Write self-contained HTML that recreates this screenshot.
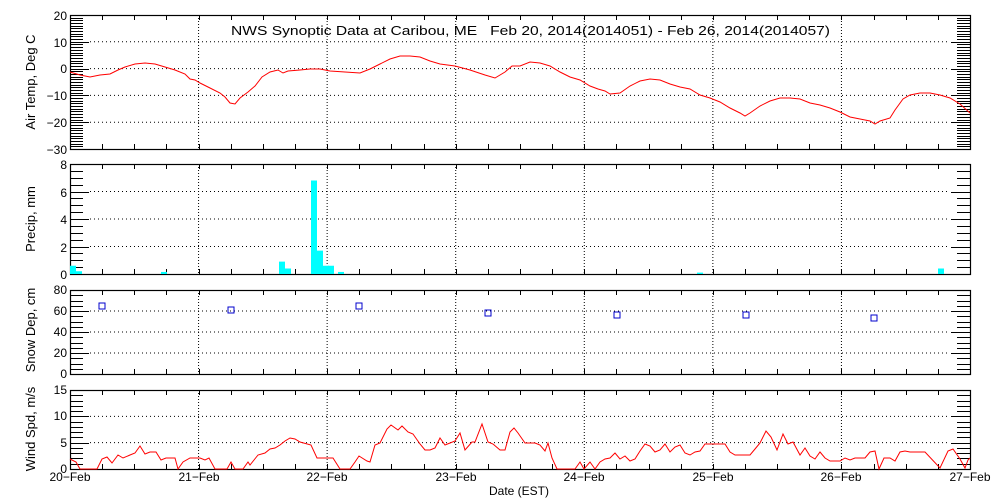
<!DOCTYPE html>
<html><head><meta charset="utf-8"><style>
html,body{margin:0;padding:0;background:#fff;width:1000px;height:500px;overflow:hidden}
svg{display:block}
text{font-family:"Liberation Sans",sans-serif;font-size:12px;fill:#000}
</style></head><body>
<svg id="s" width="1000" height="500" xmlns="http://www.w3.org/2000/svg">
<g id="g"></g>
<text x="231" y="35" textLength="599" lengthAdjust="spacingAndGlyphs" style="font-size:13px;white-space:pre" xml:space="preserve">NWS Synoptic Data at Caribou, ME   Feb 20, 2014(2014051) - Feb 26, 2014(2014057)</text>
<g text-anchor="end">
<text x="67" y="20">20</text><text x="67" y="47">10</text><text x="67" y="73">0</text><text x="67" y="100">−10</text><text x="67" y="127">−20</text><text x="67" y="154">−30</text>
<text x="67" y="169">8</text><text x="67" y="197">6</text><text x="67" y="224">4</text><text x="67" y="252">2</text><text x="67" y="279">0</text>
<text x="67" y="294">80</text><text x="67" y="315">60</text><text x="67" y="336">40</text><text x="67" y="357">20</text><text x="67" y="378">0</text>
<text x="67" y="394">15</text><text x="67" y="420">10</text><text x="67" y="447">5</text><text x="67" y="473">0</text>
</g>
<g text-anchor="middle">
<text transform="translate(35,82) rotate(-90)" style="font-size:13px">Air Temp, Deg C</text>
<text transform="translate(35,219) rotate(-90)" style="font-size:13px">Precip, mm</text>
<text transform="translate(35,330) rotate(-90)" style="font-size:13px">Snow Dep, cm</text>
<text transform="translate(35,429) rotate(-90)" style="font-size:13px">Wind Spd, m/s</text>
<text x="70" y="481">20−Feb</text><text x="199" y="481">21−Feb</text><text x="327" y="481">22−Feb</text><text x="456" y="481">23−Feb</text><text x="584" y="481">24−Feb</text><text x="713" y="481">25−Feb</text><text x="841" y="481">26−Feb</text><text x="970" y="481">27−Feb</text>
<text x="519" y="495" style="font-size:12px">Date (EST)</text>
</g>
</svg>
<script>
var g=document.getElementById('g'),h='';
function L(x1,y1,x2,y2,a){h+='<line x1="'+x1+'" y1="'+y1+'" x2="'+x2+'" y2="'+y2+'" stroke="#000" stroke-width="1" '+(a||'')+'/>';}
var P=[[15,149,20,-30,1,10,[10,0,-10,-20]],[164,274,8,0,0.5,2,[6,4,2]],[290,374,80,0,5,20,[60,40,20]],[390,469,15,0,1,5,[10,5]]];
var D=900/7;
P.forEach(function(p){var t=p[0],b=p[1],hi=p[2],lo=p[3];
function Y(v){return t+(hi-v)*(b-t)/(hi-lo);}
for(var d=1;d<7;d++){var x=70+d*D;L(x,t,x,b,'stroke-dasharray="1,2"');}
p[6].forEach(function(v){L(90,Y(v),950,Y(v),'stroke-dasharray="1,3"');});
for(var v=lo;v<=hi+1e-6;v+=p[4]){var m=Math.abs(v/p[5]-Math.round(v/p[5]))<1e-6;var len=m?19:13;var y=Math.round(Y(v))+0.5;L(70,y,70+len,y);L(970,y,970-len,y);}
for(var q=1;q<28;q++){var x=Math.round(70+q*D/4)+0.5;L(x,t,x,t+5);L(x,b,x,b-5);}
h+='<rect x="70.5" y="'+(t+0.5)+'" width="900" height="'+(b-t)+'" fill="none" stroke="#000" stroke-width="1.2"/>';
});
var bars=[[70,0.6],[76,0.2],[161,0.15],[279,0.9],[285,0.4],[311,6.8],[317,1.7],[323,0.6],[328,0.6],[338,0.15],[697,0.1],[938,0.4]];
bars.forEach(function(b){var y=274-b[1]*13.75;h+='<rect x="'+b[0]+'" y="'+y+'" width="6" height="'+(274-y)+'" fill="#0ff"/>';});
var tp="70,72 80,75 90,77 100,75 110,74 118,70 125,67 135,64 145,63 155,64 165,67 175,70 185,74 190,79 195,80 200,83 210,88 220,93 225,97 230,103 235,104 240,98 248,92 255,86 262,77 270,72 278,70 283,73 288,71 300,70 310,69 320,69 330,71 345,72 360,73 370,69 380,64 390,59 400,56 410,56 420,57 430,61 440,64 455,66 470,70 485,75 495,78 505,72 512,66 520,66 530,62 540,63 550,66 560,72 570,77 580,80 590,86 598,89 605,91 610,94 620,93 630,86 640,81 650,79 660,80 670,84 680,87 690,89 700,95 710,98 720,102 730,108 740,113 745,116 750,113 760,106 770,101 780,98 790,98 800,99 810,103 820,105 830,108 840,112 850,117 860,119 870,121 875,124 880,121 890,118 895,110 903,99 910,95 920,93 930,93 940,95 950,98 960,104 970,113";
h+='<polyline points="'+tp+'" fill="none" stroke="#f00" stroke-width="1"/>';
var wp="70,459 76,462 80,469 97,469 102,459 107,457 112,463 118,455 123,458 130,455 135,453 140,446 145,454 150,452 156,452 161,460 166,458 175,458 178,469 183,462 190,458 200,458 205,460 209,458 215,469 227,469 231,462 235,469 243,469 248,462 250,465 258,455 265,453 270,449 275,448 280,445 285,441 290,438 295,439 300,442 311,445 317,458 333,458 340,469 350,469 355,462 359,456 367,461 370,462 375,445 380,443 387,429 391,425 398,430 402,426 408,432 413,434 420,444 425,450 430,450 435,448 440,438 445,445 450,443 455,441 460,433 465,450 472,442 475,442 482,424 488,442 493,444 500,450 505,450 510,432 514,428 518,433 525,443 535,443 540,445 545,451 548,443 552,458 557,469 575,469 580,462 584,469 590,462 595,469 600,462 605,459 610,458 615,453 620,459 625,456 630,461 635,459 640,451 645,444 650,446 655,452 660,450 665,444 670,452 675,447 680,445 685,453 690,455 695,452 700,451 705,444 710,444 725,444 730,452 735,455 750,455 755,449 760,443 766,431 771,437 777,450 783,434 788,444 793,442 800,455 805,448 810,456 815,459 820,452 825,458 830,461 840,461 845,458 850,460 855,458 865,458 870,452 875,451 879,469 884,458 890,458 895,461 900,452 905,451 910,452 925,452 940,468 948,451 953,449 960,459 965,468 968,460 970,458";
h+='<polyline points="'+wp+'" fill="none" stroke="#f00" stroke-width="1"/>';
[[102,306],[231,310],[359,306],[488,313],[617,315],[746,315],[874,318]].forEach(function(s){h+='<rect x="'+(s[0]-3)+'" y="'+(s[1]-3)+'" width="6" height="6" fill="none" stroke="#00c" stroke-width="1"/>';});
g.innerHTML=h;
</script>
</body></html>
